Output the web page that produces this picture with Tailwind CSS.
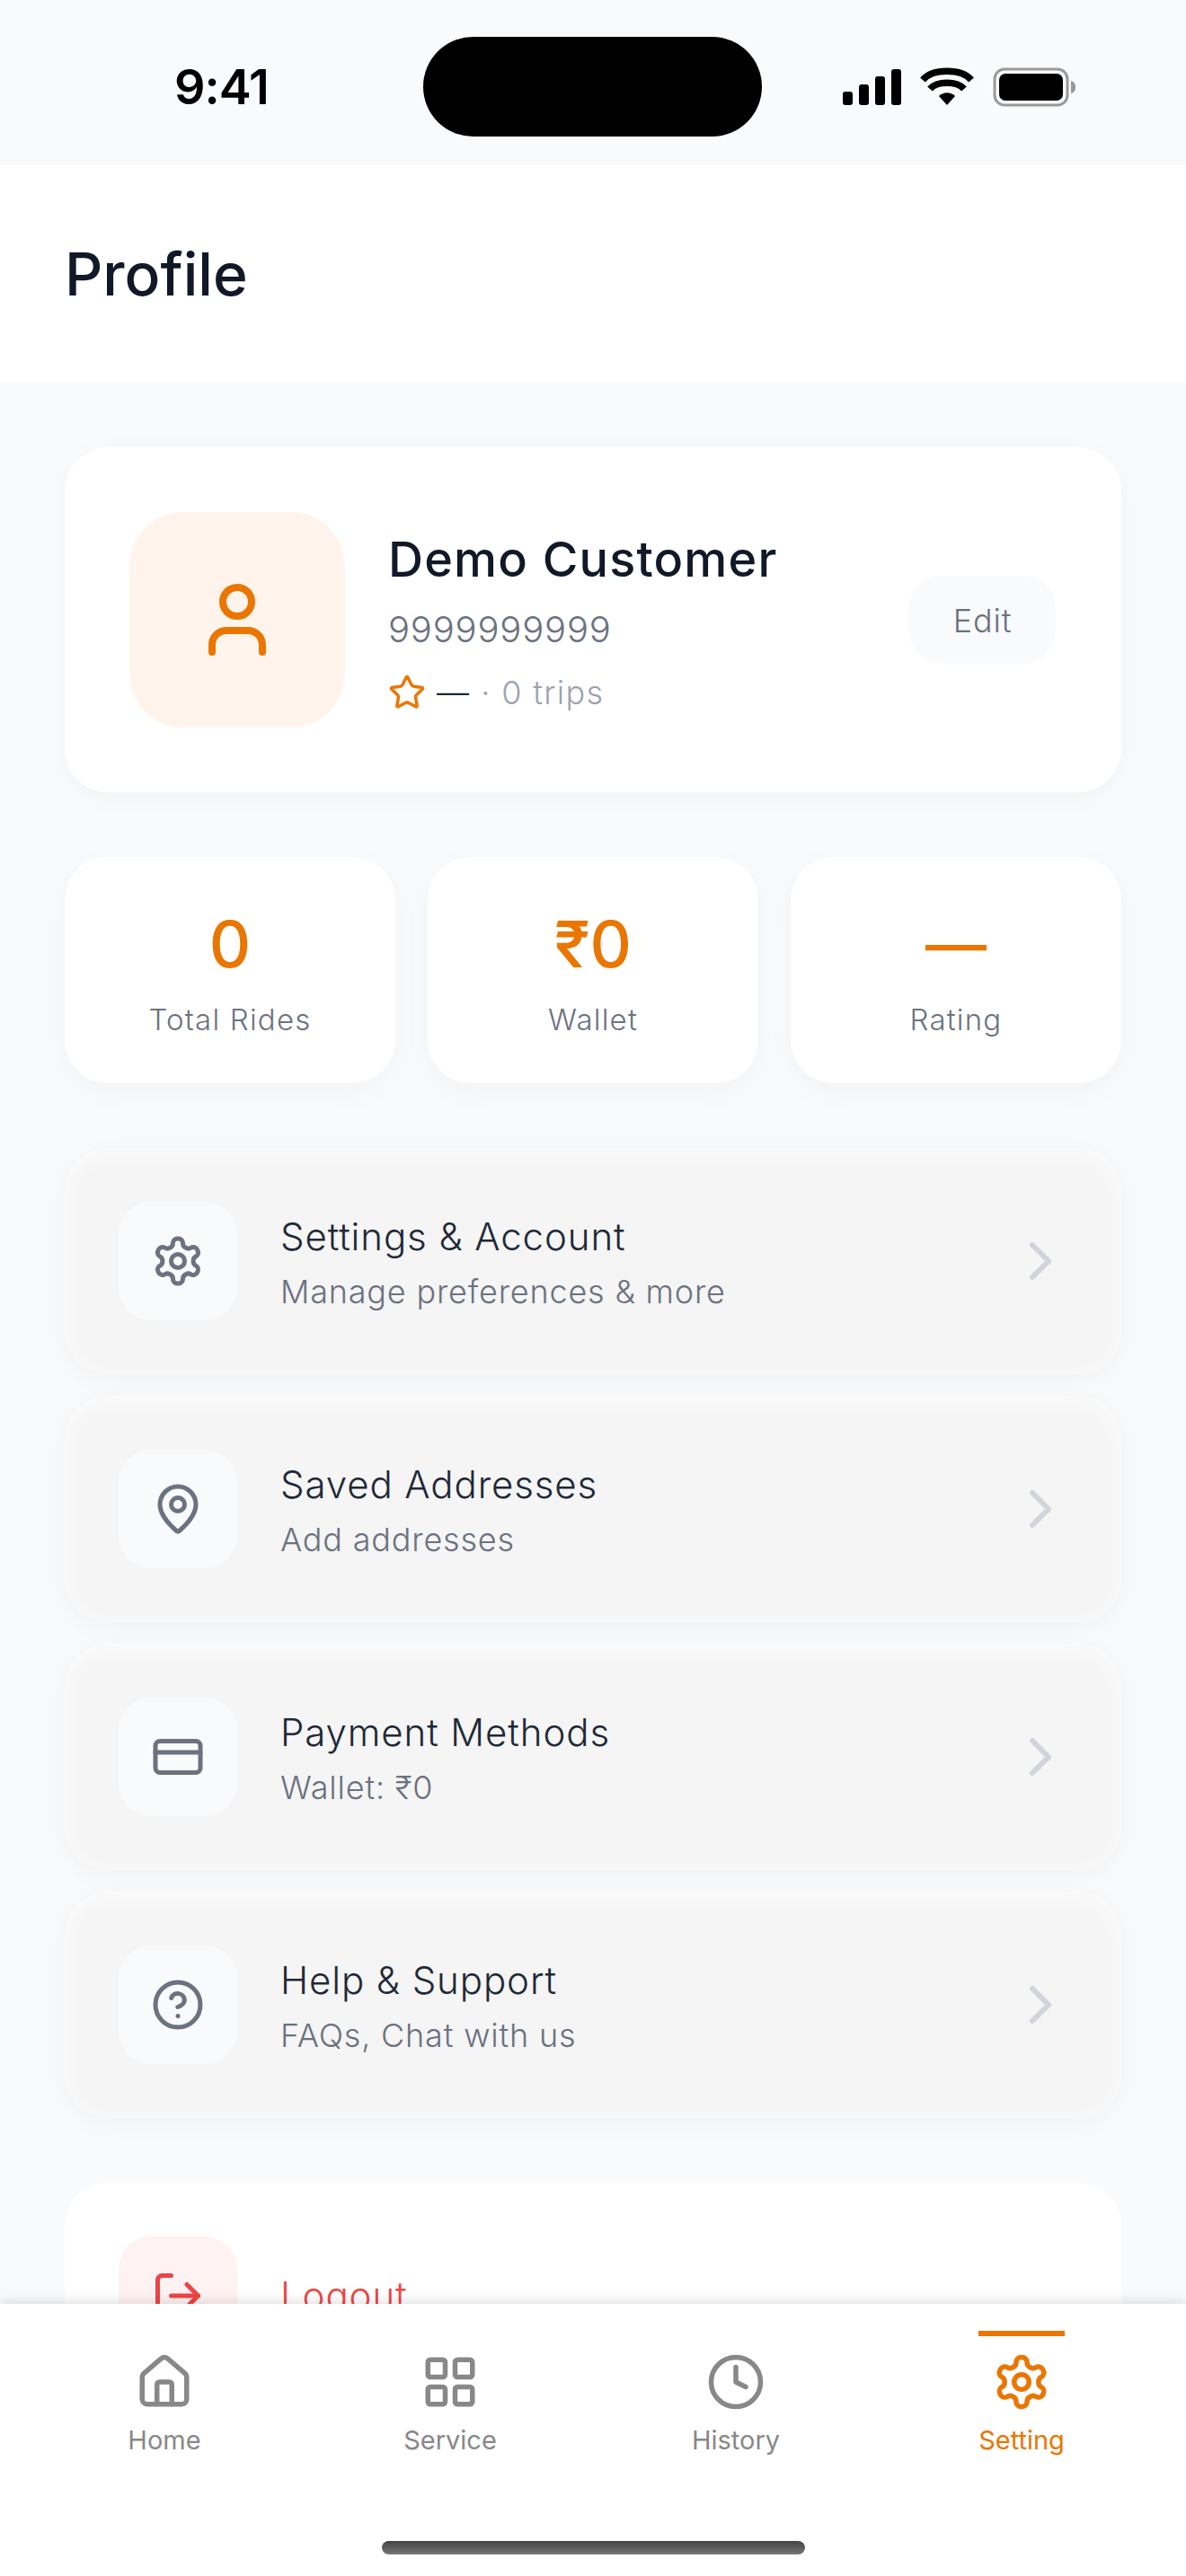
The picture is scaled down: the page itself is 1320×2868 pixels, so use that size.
<!DOCTYPE html>
<html>
  <head>
    <title>Profile</title>
    <script src="https://cdn.jsdelivr.net/npm/@tailwindcss/browser@4"></script>
  </head>
  <body class="font-['Inter',sans-serif]">
    <div class="w-[1320px] h-[2868px] overflow-hidden flex flex-col bg-[#f9fafb]">
      <!-- status bar -->
      <div class="h-[184px] shrink-0 flex items-start pl-[194px] pt-[41px]">
        <div class="w-[277px] h-[111px] flex items-center text-[54px] font-semibold text-black tracking-[-1px]">9:41</div>
        <div class="w-[377px] h-[111px] rounded-[56px] bg-black"></div>
        <div class="ml-[89px] h-[111px] flex items-center">
          <svg width="262" height="44" viewBox="0 0 262 44">
            <rect x="1" y="27" width="11" height="15" rx="3" fill="#000"/>
            <rect x="19" y="19" width="11" height="23" rx="3" fill="#000"/>
            <rect x="37" y="10" width="11" height="32" rx="3" fill="#000"/>
            <rect x="55" y="2" width="11" height="40" rx="3" fill="#000"/>
            <path d="M90 14 C101 1 133 1 144 14" fill="none" stroke="#000" stroke-width="7.5"/>
            <path d="M98 24 C106 15 128 15 136 24" fill="none" stroke="#000" stroke-width="7.5"/>
            <path d="M108 32 C113 27 121 27 126 32 L117 42 Z" fill="#000"/>
            <rect x="170" y="2" width="81" height="40" rx="11" fill="none" stroke="#999" stroke-width="3"/>
            <rect x="175" y="7" width="71" height="30" rx="7" fill="#000"/>
            <path d="M255 15 C259 16 260 19 260 22 C260 25 259 28 255 29 Z" fill="#999"/>
          </svg>
        </div>
      </div>

      <!-- header -->
      <div class="h-[242px] shrink-0 bg-white flex items-center px-[72px]">
        <h1 class="text-[66px] font-medium text-[#111827]">Profile</h1>
      </div>

      <!-- content -->
      <div class="flex-1 min-h-0 overflow-hidden px-[72px] pt-[72px] flex flex-col gap-[72px]">
        <div class="shrink-0 h-[384px] rounded-[48px] bg-white shadow-[0_6px_30px_rgba(0,0,0,0.03)] pl-[72px] pr-[73px] flex items-center gap-[48px]">
          <div class="w-[240px] h-[240px] rounded-[60px] bg-[#fff4ec] flex items-center justify-center shrink-0">
            <svg width="96" height="96" viewBox="0 0 24 24" fill="none" stroke="#ea7600" stroke-width="2" stroke-linecap="round" stroke-linejoin="round"><path d="M19 21v-2a4 4 0 0 0-4-4H9a4 4 0 0 0-4 4v2"/><circle cx="12" cy="7" r="4"/></svg>
          </div>
          <div class="flex-1 min-w-0">
            <div class="text-[54px] leading-[78px] mt-[2px] font-medium text-[#111827] tracking-[1.2px]">Demo Customer</div>
            <div class="text-[40px] leading-[60px] mt-[9px] font-light text-[#6b7280] tracking-[0.8px]">9999999999</div>
            <div class="flex items-center mt-[13px] h-[54px] text-[36px] font-light tracking-[1.3px]">
              <svg class="mr-[12px]" width="42" height="42" viewBox="0 0 24 24" fill="none" stroke="#ea7600" stroke-width="2" stroke-linecap="round" stroke-linejoin="round"><path d="M11.525 2.295a.53.53 0 0 1 .95 0l2.31 4.679a2.123 2.123 0 0 0 1.595 1.16l5.166.756a.53.53 0 0 1 .294.904l-3.736 3.638a2.123 2.123 0 0 0-.611 1.878l.882 5.14a.53.53 0 0 1-.771.56l-4.618-2.428a2.122 2.122 0 0 0-1.973 0L6.396 21.01a.53.53 0 0 1-.77-.56l.881-5.139a2.122 2.122 0 0 0-.611-1.879L2.16 9.795a.53.53 0 0 1 .294-.906l5.165-.755a2.122 2.122 0 0 0 1.597-1.16z"/></svg>
              <span class="text-[#1f2937]">—</span>
              <span class="ml-[12px] text-[#9ca3af]">· 0 trips</span>
            </div>
          </div>
          <div class="w-[163px] h-[98px] pt-[2px] rounded-[36px] bg-[#f9fafb] flex items-center justify-center text-[36px] font-light text-[#6b7280] tracking-[0.8px] shrink-0">Edit</div>
        </div>

        <div class="shrink-0 grid grid-cols-3 gap-[36px]">
          <div class="h-[252px] rounded-[48px] bg-white shadow-[0_9px_36px_rgba(0,0,0,0.03)] flex flex-col items-center justify-center">
            <div class="text-[72px] leading-[96px] mt-[2px] font-medium text-[#ea7600]">0</div>
            <div class="text-[33px] leading-[48px] mt-[12px] font-light text-[#6b7280] tracking-[1.2px]">Total Rides</div>
          </div>
          <div class="h-[252px] rounded-[48px] bg-white shadow-[0_9px_36px_rgba(0,0,0,0.03)] flex flex-col items-center justify-center">
            <div class="text-[72px] leading-[96px] mt-[2px] font-medium text-[#ea7600]">₹0</div>
            <div class="text-[33px] leading-[48px] mt-[12px] font-light text-[#6b7280] tracking-[1.2px]">Wallet</div>
          </div>
          <div class="h-[252px] rounded-[48px] bg-white shadow-[0_9px_36px_rgba(0,0,0,0.03)] flex flex-col items-center justify-center">
            <div class="text-[68px] leading-[96px] mt-[2px] font-medium text-[#ea7600]">—</div>
            <div class="text-[33px] leading-[48px] mt-[12px] font-light text-[#6b7280] tracking-[1.2px]">Rating</div>
          </div>
        </div>

        <div class="shrink-0 flex flex-col gap-[24px]">
          <div class="h-[252px] rounded-[48px] bg-[#f5f5f5] shadow-[inset_0_6px_24px_rgba(255,255,255,0.8),0_6px_27px_rgba(0,0,0,0.04)] pl-[60px] pr-[54px] flex items-center">
            <div class="w-[132px] h-[132px] rounded-[36px] bg-[#f9fafb] flex items-center justify-center shrink-0">
              <svg width="60" height="60" viewBox="0 0 24 24" fill="none" stroke="#6b7280" stroke-width="2" stroke-linecap="round" stroke-linejoin="round"><path d="M12.22 2h-.44a2 2 0 0 0-2 2v.18a2 2 0 0 1-1 1.73l-.43.25a2 2 0 0 1-2 0l-.15-.08a2 2 0 0 0-2.73.73l-.22.38a2 2 0 0 0 .73 2.73l.15.1a2 2 0 0 1 1 1.72v.51a2 2 0 0 1-1 1.74l-.15.09a2 2 0 0 0-.73 2.73l.22.38a2 2 0 0 0 2.73.73l.15-.08a2 2 0 0 1 2 0l.43.25a2 2 0 0 1 1 1.73V20a2 2 0 0 0 2 2h.44a2 2 0 0 0 2-2v-.18a2 2 0 0 1 1-1.73l.43-.25a2 2 0 0 1 2 0l.15.08a2 2 0 0 0 2.73-.73l.22-.39a2 2 0 0 0-.73-2.73l-.15-.08a2 2 0 0 1-1-1.74v-.5a2 2 0 0 1 1-1.74l.15-.09a2 2 0 0 0 .73-2.73l-.22-.38a2 2 0 0 0-2.73-.73l-.15.08a2 2 0 0 1-2 0l-.43-.25a2 2 0 0 1-1-1.73V4a2 2 0 0 0-2-2z"/><circle cx="12" cy="12" r="3"/></svg>
            </div>
            <div class="ml-[48px] flex-1 min-w-0">
              <div class="text-[42px] leading-[60px] mt-[3px] font-light text-[#1f2937] tracking-[0.9px]">Settings &amp; Account</div>
              <div class="text-[36px] leading-[54px] mt-[4px] font-light text-[#6b7280] tracking-[0.8px]">Manage preferences &amp; more</div>
            </div>
            <svg width="72" height="72" viewBox="0 0 24 24" fill="none" stroke="#d1d5db" stroke-width="2" stroke-linecap="round" stroke-linejoin="round"><path d="m9 18 6-6-6-6"/></svg>
          </div>
          <div class="h-[252px] rounded-[48px] bg-[#f5f5f5] shadow-[inset_0_6px_24px_rgba(255,255,255,0.8),0_6px_27px_rgba(0,0,0,0.04)] pl-[60px] pr-[54px] flex items-center">
            <div class="w-[132px] h-[132px] rounded-[36px] bg-[#f9fafb] flex items-center justify-center shrink-0">
              <svg width="60" height="60" viewBox="0 0 24 24" fill="none" stroke="#6b7280" stroke-width="2" stroke-linecap="round" stroke-linejoin="round"><path d="M20 10c0 4.993-5.539 10.193-7.399 11.799a1 1 0 0 1-1.202 0C9.539 20.193 4 14.993 4 10a8 8 0 0 1 16 0"/><circle cx="12" cy="10" r="3"/></svg>
            </div>
            <div class="ml-[48px] flex-1 min-w-0">
              <div class="text-[42px] leading-[60px] mt-[3px] font-light text-[#1f2937] tracking-[0.9px]">Saved Addresses</div>
              <div class="text-[36px] leading-[54px] mt-[4px] font-light text-[#6b7280] tracking-[0.8px]">Add addresses</div>
            </div>
            <svg width="72" height="72" viewBox="0 0 24 24" fill="none" stroke="#d1d5db" stroke-width="2" stroke-linecap="round" stroke-linejoin="round"><path d="m9 18 6-6-6-6"/></svg>
          </div>
          <div class="h-[252px] rounded-[48px] bg-[#f5f5f5] shadow-[inset_0_6px_24px_rgba(255,255,255,0.8),0_6px_27px_rgba(0,0,0,0.04)] pl-[60px] pr-[54px] flex items-center">
            <div class="w-[132px] h-[132px] rounded-[36px] bg-[#f9fafb] flex items-center justify-center shrink-0">
              <svg width="60" height="60" viewBox="0 0 24 24" fill="none" stroke="#6b7280" stroke-width="2" stroke-linecap="round" stroke-linejoin="round"><rect width="20" height="14" x="2" y="5" rx="2"/><line x1="2" x2="22" y1="10" y2="10"/></svg>
            </div>
            <div class="ml-[48px] flex-1 min-w-0">
              <div class="text-[42px] leading-[60px] mt-[3px] font-light text-[#1f2937] tracking-[0.9px]">Payment Methods</div>
              <div class="text-[36px] leading-[54px] mt-[4px] font-light text-[#6b7280] tracking-[0.8px]">Wallet: ₹0</div>
            </div>
            <svg width="72" height="72" viewBox="0 0 24 24" fill="none" stroke="#d1d5db" stroke-width="2" stroke-linecap="round" stroke-linejoin="round"><path d="m9 18 6-6-6-6"/></svg>
          </div>
          <div class="h-[252px] rounded-[48px] bg-[#f5f5f5] shadow-[inset_0_6px_24px_rgba(255,255,255,0.8),0_6px_27px_rgba(0,0,0,0.04)] pl-[60px] pr-[54px] flex items-center">
            <div class="w-[132px] h-[132px] rounded-[36px] bg-[#f9fafb] flex items-center justify-center shrink-0">
              <svg width="60" height="60" viewBox="0 0 24 24" fill="none" stroke="#6b7280" stroke-width="2" stroke-linecap="round" stroke-linejoin="round"><circle cx="12" cy="12" r="10"/><path d="M9.09 9a3 3 0 0 1 5.83 1c0 2-3 3-3 3"/><path d="M12 17h.01"/></svg>
            </div>
            <div class="ml-[48px] flex-1 min-w-0">
              <div class="text-[42px] leading-[60px] mt-[3px] font-light text-[#1f2937] tracking-[0.9px]">Help &amp; Support</div>
              <div class="text-[36px] leading-[54px] mt-[4px] font-light text-[#6b7280] tracking-[0.8px]">FAQs, Chat with us</div>
            </div>
            <svg width="72" height="72" viewBox="0 0 24 24" fill="none" stroke="#d1d5db" stroke-width="2" stroke-linecap="round" stroke-linejoin="round"><path d="m9 18 6-6-6-6"/></svg>
          </div>
        </div>

        <div class="shrink-0 h-[252px] rounded-[48px] bg-white pl-[60px] flex items-center">
          <div class="w-[132px] h-[132px] rounded-[36px] bg-[#fef2f2] flex items-center justify-center shrink-0">
            <svg width="60" height="60" viewBox="0 0 24 24" fill="none" stroke="#ef4444" stroke-width="2" stroke-linecap="round" stroke-linejoin="round"><path d="M9 21H5a2 2 0 0 1-2-2V5a2 2 0 0 1 2-2h4"/><path d="m16 17 5-5-5-5"/><path d="M21 12H9"/></svg>
          </div>
          <div class="ml-[48px] -mt-[2px] text-[42px] font-light text-[#ef4444] tracking-[0.9px]">Logout</div>
        </div>
      </div>

      <!-- bottom nav -->
      <div class="relative z-10 h-[303px] shrink-0 bg-white shadow-[0_-3px_12px_rgba(0,0,0,0.12)] px-[24px] grid grid-cols-4 items-start pt-[30px]">
        <div class="flex flex-col items-center relative">
          <div class="h-[6px]"></div>
          <svg class="mt-[18px]" width="66" height="66" viewBox="0 0 24 24" fill="none" stroke="#888888" stroke-width="2" stroke-linecap="round" stroke-linejoin="round"><path d="M15 21v-8a1 1 0 0 0-1-1h-4a1 1 0 0 0-1 1v8"/><path d="M3 10a2 2 0 0 1 .709-1.528l7-6a2 2 0 0 1 2.582 0l7 6A2 2 0 0 1 21 10v9a2 2 0 0 1-2 2H5a2 2 0 0 1-2-2z"/></svg>
          <div class="mt-[9px] text-[29px] leading-[45px] font-normal text-[#888888]">Home</div>
        </div>
        <div class="flex flex-col items-center">
          <div class="h-[6px]"></div>
          <svg class="mt-[18px]" width="66" height="66" viewBox="0 0 24 24" fill="none" stroke="#888888" stroke-width="2" stroke-linecap="round" stroke-linejoin="round"><rect width="7" height="7" x="3" y="3" rx="1"/><rect width="7" height="7" x="14" y="3" rx="1"/><rect width="7" height="7" x="14" y="14" rx="1"/><rect width="7" height="7" x="3" y="14" rx="1"/></svg>
          <div class="mt-[9px] text-[29px] leading-[45px] font-normal text-[#888888]">Service</div>
        </div>
        <div class="flex flex-col items-center">
          <div class="h-[6px]"></div>
          <svg class="mt-[18px]" width="66" height="66" viewBox="0 0 24 24" fill="none" stroke="#888888" stroke-width="2" stroke-linecap="round" stroke-linejoin="round"><circle cx="12" cy="12" r="10"/><polyline points="12 6 12 12 16 14"/></svg>
          <div class="mt-[9px] text-[29px] leading-[45px] font-normal text-[#888888]">History</div>
        </div>
        <div class="flex flex-col items-center">
          <div class="h-[6px] w-[96px] bg-[#ea7600]"></div>
          <svg class="mt-[18px]" width="66" height="66" viewBox="0 0 24 24" fill="none" stroke="#ea7600" stroke-width="2" stroke-linecap="round" stroke-linejoin="round"><path d="M12.22 2h-.44a2 2 0 0 0-2 2v.18a2 2 0 0 1-1 1.73l-.43.25a2 2 0 0 1-2 0l-.15-.08a2 2 0 0 0-2.73.73l-.22.38a2 2 0 0 0 .73 2.73l.15.1a2 2 0 0 1 1 1.72v.51a2 2 0 0 1-1 1.74l-.15.09a2 2 0 0 0-.73 2.73l.22.38a2 2 0 0 0 2.73.73l.15-.08a2 2 0 0 1 2 0l.43.25a2 2 0 0 1 1 1.73V20a2 2 0 0 0 2 2h.44a2 2 0 0 0 2-2v-.18a2 2 0 0 1 1-1.73l.43-.25a2 2 0 0 1 2 0l.15.08a2 2 0 0 0 2.73-.73l.22-.39a2 2 0 0 0-.73-2.73l-.15-.08a2 2 0 0 1-1-1.74v-.5a2 2 0 0 1 1-1.74l.15-.09a2 2 0 0 0 .73-2.73l-.22-.38a2 2 0 0 0-2.73-.73l-.15.08a2 2 0 0 1-2 0l-.43-.25a2 2 0 0 1-1-1.73V4a2 2 0 0 0-2-2z"/><circle cx="12" cy="12" r="3"/></svg>
          <div class="mt-[9px] text-[29px] leading-[45px] font-normal text-[#ea7600]">Setting</div>
        </div>
        <div class="absolute left-[425px] top-[264px] w-[471px] h-[15px] rounded-full bg-gradient-to-b from-[#444444] to-[#777777]"></div>
      </div>
    </div>
  </body>
</html>
